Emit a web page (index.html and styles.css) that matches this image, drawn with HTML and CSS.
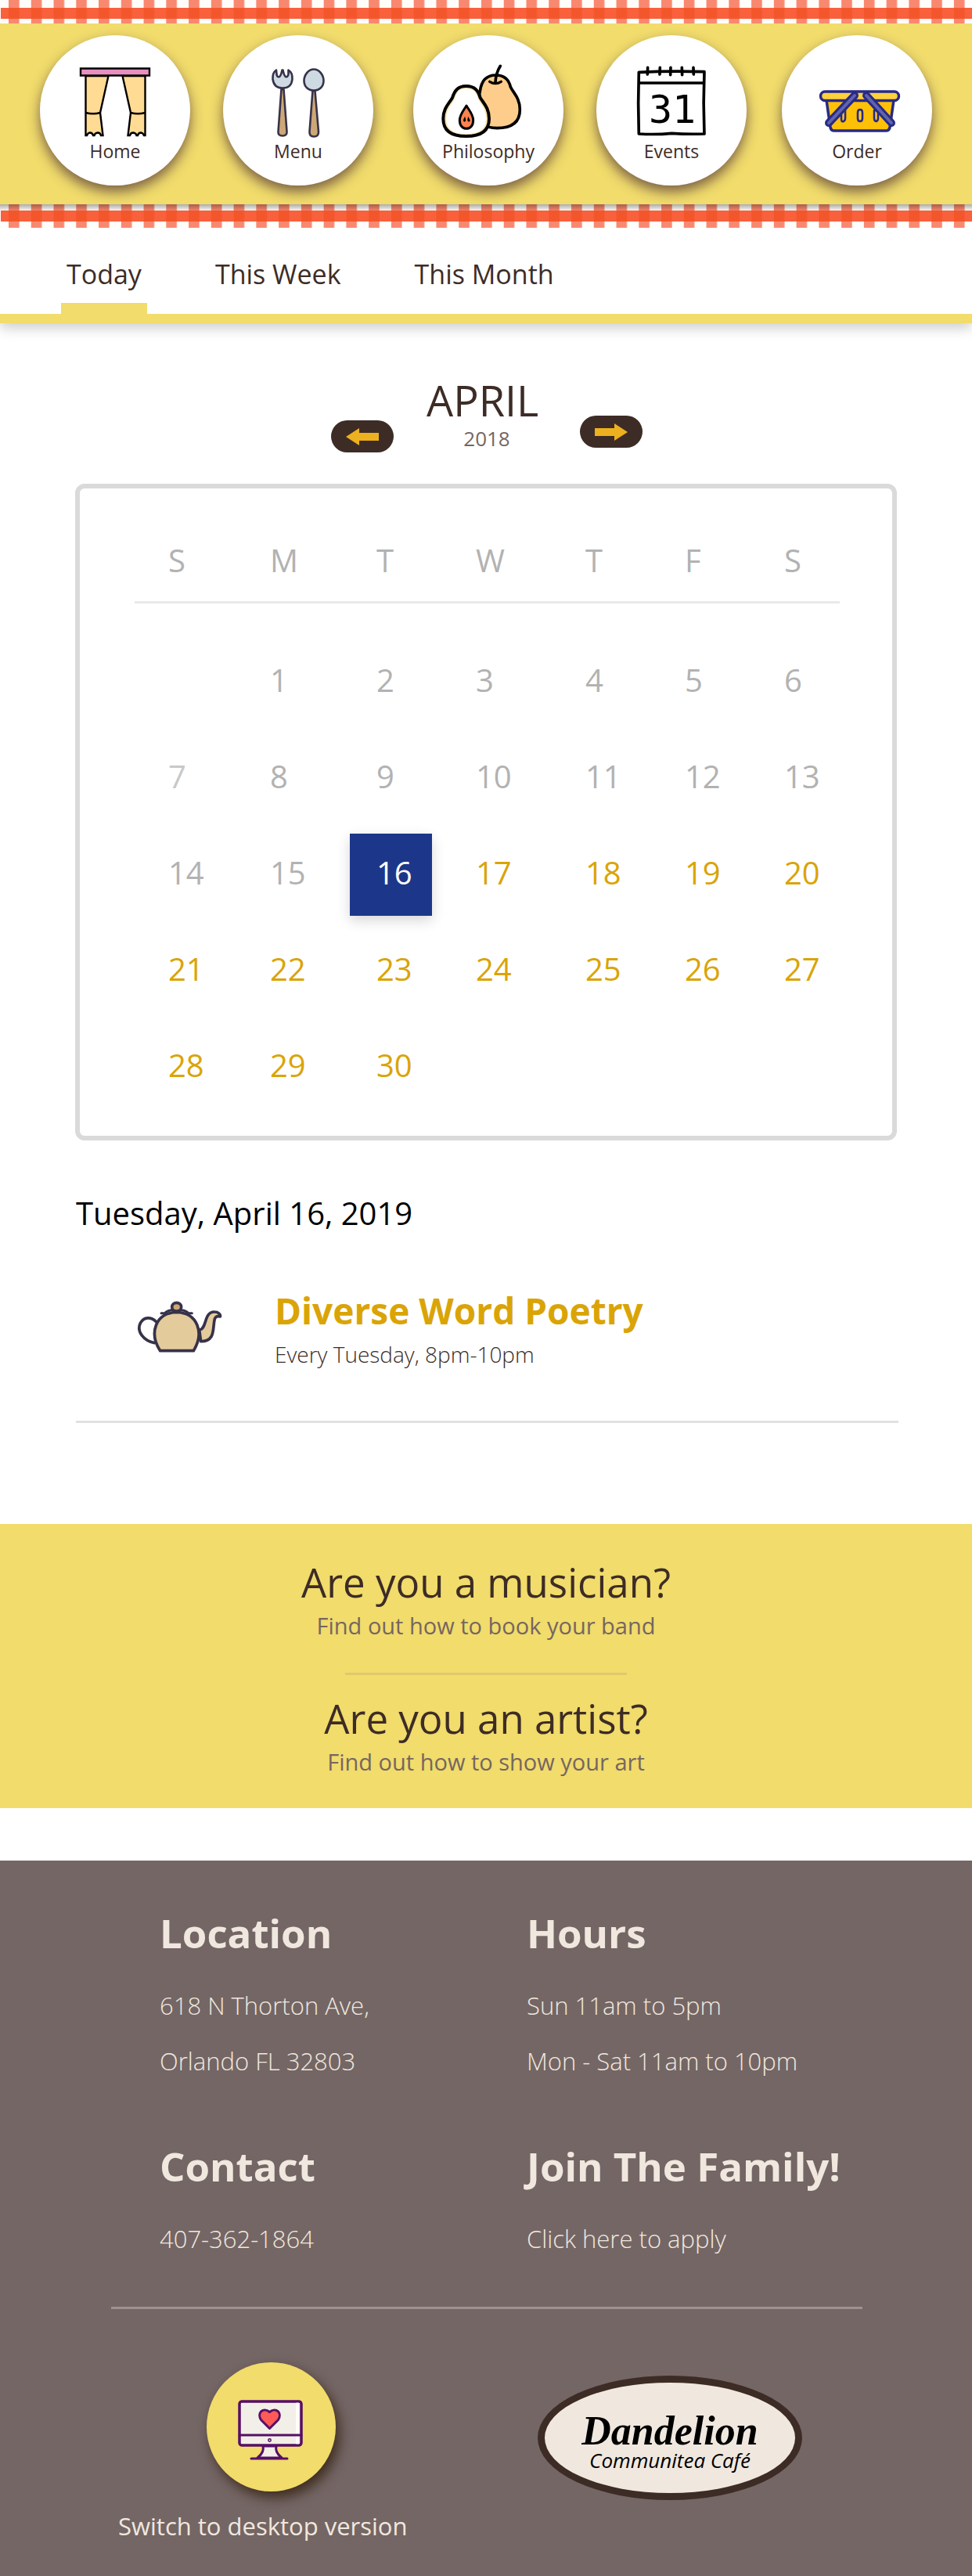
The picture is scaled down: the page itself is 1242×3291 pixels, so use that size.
FILE: index.html
```html
<!DOCTYPE html>
<html lang="en">
<head>
<meta charset="utf-8">
<meta name="viewport" content="width=device-width, initial-scale=1">
<title>Events – Dandelion Communitea Café</title>
<link rel="stylesheet" href="styles.css">
</head>
<body>
<header class="site-header">
  <svg class="gingham" aria-hidden="true">
    <defs>
      <pattern id="check" width="28.76" height="30" patternUnits="userSpaceOnUse" x="11">
        <rect width="28.76" height="30" fill="#fffdf9"/>
        <rect width="13.6" height="30" fill="#f98870"/>
      </pattern>
      <pattern id="cross" width="28.76" height="30" patternUnits="userSpaceOnUse" x="11">
        <rect width="28.76" height="30" fill="#f9603c"/>
        <rect width="13.6" height="30" fill="#f4562b"/>
      </pattern>
    </defs>
    <rect width="100%" height="30" fill="url(#check)"/>
    <rect x="1" y="10" width="100%" height="14" fill="url(#cross)"/>
  </svg>
  <nav class="main-nav" aria-label="Main">
    <a class="nav-item" href="#home">
      <svg class="nav-icon" viewBox="92 80 110 98" aria-hidden="true">
        <g fill="#ffdb93" stroke="#000" stroke-width="2.4">
          <path d="M109.500 97H138.500L128 144L131.500 173L129 173Q128 169.500 125 169.500Q121 170 120.500 173H119Q118 169.500 115 169.500Q112 170 111 173H109.500Z"/>
          <path d="M109.500 144Q119 146.500 128 144"/>
          <path d="M185.500 97H156.500L167 144L163.500 173L166 173Q167 169.500 170 169.500Q174 170 174.500 173H176Q177 169.500 180 169.500Q183 170 184 173H185.500Z"/>
          <path d="M185.500 144Q176 146.500 167 144"/>
          <path d="M103 87.500H191V96.500H103Z" fill="#e78fbf"/>
        </g>
      </svg>
      <span>Home</span>
    </a>
    <a class="nav-item" href="#menu">
      <svg class="nav-icon" viewBox="326 80 110 98" aria-hidden="true">
        <g stroke="#37324a" stroke-width="2.6" stroke-linejoin="round">
          <path d="M359.500 114H362.500L366.500 168Q367 173.500 361 173.500Q355 173.500 355.500 168Z" fill="#cda775"/>
          <path d="M353 89.500Q348 93 348.500 101Q350 112.500 361 112.500Q372.500 112.500 373.500 101Q374 93 368.500 89.500V95Q367.500 99 365 98Q363 97 361.500 89.500H360.500Q359 97 357 98Q354 99 353.500 95Z" fill="#cedae2"/>
          <path d="M399.500 116H402.500L407 168Q407.500 174.500 401 174.500Q395 174.500 395.500 168Z" fill="#cda775"/>
          <path d="M401 88.500C408 88.500 413.500 96 413.500 103C413.500 111 408 115.500 401 115.500C394 115.500 388.500 111 388.500 103C388.500 96 394 88.500 401 88.500Z" fill="#cedae2"/>
        </g>
      </svg>
      <span>Menu</span>
    </a>
    <a class="nav-item" href="#philosophy">
      <svg class="nav-icon" viewBox="569 80 110 98" aria-hidden="true">
        <g transform="translate(555 75) scale(.3333)" stroke="#000" stroke-linecap="round" stroke-linejoin="round">
          <path d="M235 63C270 63 286 82 292 108C302 130 328 150 328 195C328 245 295 266 240 266C195 266 170 250 160 200L175 125C180 85 200 63 235 63Z" fill="#ffcd8b" stroke-width="11"/>
          <path d="M212 88Q234 102 256 88" fill="none" stroke-width="10"/>
          <path d="M234 90Q236 55 253 28" fill="none" stroke-width="11"/>
          <path d="M122 105C155 105 168 122 176 150C190 172 210 190 210 230C210 275 180 297 122 297C64 297 34 275 34 230C34 190 56 172 69 150C78 122 90 105 122 105Z" fill="#ffe5b3" stroke-width="12"/>
          <path d="M122 115C150 115 160 130 167 154C180 178 198 194 198 230C198 268 172 288 122 288C72 288 46 268 46 230C46 194 66 178 78 154C86 130 94 115 122 115Z" fill="#fff" stroke="none"/>
          <path d="M123 180C135 200 149 214 149 236C149 256 138 268 123 268C108 268 97 256 97 236C97 214 111 200 123 180Z" fill="#fb8350" stroke-width="9"/>
          <path d="M117 225Q107 240 116 241Q123 240 117 225ZM130 225Q125 240 132 241Q141 240 130 225Z" fill="#000" stroke-width="2"/>
        </g>
      </svg>
      <span>Philosophy</span>
    </a>
    <a class="nav-item" href="#events">
      <svg class="nav-icon" viewBox="803 80 110 98" aria-hidden="true">
        <g transform="translate(555 75) scale(.3333)" fill="none" stroke="#000" stroke-width="11" stroke-linecap="round" stroke-linejoin="round">
          <path d="M784 52Q900 46 1035 50Q1030 170 1035 288Q970 290 910 286Q850 292 784 288Q780 170 784 52ZM784 93H1034"/>
          <path d="M818 34L817 60M865 34L864 60M906 34L905 62M949 34L950 62M993 34L994 60"/>
        </g>
        <text x="829" y="157" class="icon-date">31</text>
      </svg>
      <span>Events</span>
    </a>
    <a class="nav-item" href="#order">
      <svg class="nav-icon" viewBox="1040 80 110 98" aria-hidden="true">
        <g stroke="#282a86" stroke-width="3.500" stroke-linejoin="round" stroke-linecap="round">
          <path d="M1056 128H1142L1137 163Q1136 167 1132 167H1066Q1062 167 1061 163Z" fill="#ffc107"/>
          <rect x="1048.500" y="117" width="100" height="11.500" rx="5.700" fill="#ffd13b"/>
          <path d="M1075 141V152Q1075 156 1078 155Q1080 154 1080 151V141ZM1096 144Q1096 140 1099 140Q1102 140 1102 144V151Q1102 155 1099 155Q1096 155 1096 151ZM1117 141V151Q1117 155 1120 155Q1122 154 1122 151V141Z" fill="#ffc930" stroke-width="2.600"/>
        </g>
        <g fill="none" stroke-linecap="round">
          <path d="M1092 122L1059 157M1107 122L1139 157" stroke="#282a86" stroke-width="10"/>
          <path d="M1092 122L1059 157M1107 122L1139 157" stroke="#6264ab" stroke-width="4"/>
        </g>
      </svg>
      <span>Order</span>
    </a>
  </nav>
  <svg class="gingham" aria-hidden="true">
    <defs>
      <linearGradient id="shade" x2="0" y2="1">
        <stop stop-color="#000" stop-opacity=".32"/>
        <stop offset="1" stop-color="#000" stop-opacity="0"/>
      </linearGradient>
    </defs>
    <rect width="100%" height="30" fill="url(#check)"/>
    <rect x="1" y="8" width="100%" height="14" fill="url(#cross)"/>
    <rect width="100%" height="9" fill="url(#shade)"/>
  </svg>
</header>

<nav class="tabs" aria-label="Events range">
  <a class="tab tab-current" href="#today" aria-current="page">Today</a>
  <a class="tab" href="#week">This Week</a>
  <a class="tab" href="#month">This Month</a>
</nav>

<main>
  <div class="month-bar">
    <button class="month-button" type="button" aria-label="Previous month">
      <svg width="44" height="24" viewBox="0 0 44 24" aria-hidden="true"><path d="M1 12L18 1V7H43V17H18V23Z"/></svg>
    </button>
    <div class="month-title">
      <h1>APRIL</h1>
      <p>2018</p>
    </div>
    <button class="month-button month-next" type="button" aria-label="Next month">
      <svg width="44" height="24" viewBox="0 0 44 24" aria-hidden="true"><path d="M43 12L26 1V7H1V17H26V23Z"/></svg>
    </button>
  </div>

  <section class="calendar" aria-label="Calendar">
    <table>
      <colgroup>
        <col class="c-sun"><col class="c-mon"><col class="c-tue"><col class="c-wed"><col class="c-thu"><col class="c-fri"><col class="c-sat">
      </colgroup>
      <thead>
        <tr><th scope="col">S</th><th scope="col">M</th><th scope="col">T</th><th scope="col">W</th><th scope="col">T</th><th scope="col">F</th><th scope="col">S</th></tr>
      </thead>
      <tbody>
        <tr><td></td><td><button type="button" class="day">1</button></td><td><button type="button" class="day">2</button></td><td><button type="button" class="day">3</button></td><td><button type="button" class="day">4</button></td><td><button type="button" class="day">5</button></td><td><button type="button" class="day">6</button></td></tr>
        <tr><td><button type="button" class="day faded">7</button></td><td><button type="button" class="day">8</button></td><td><button type="button" class="day">9</button></td><td><button type="button" class="day">10</button></td><td><button type="button" class="day">11</button></td><td><button type="button" class="day">12</button></td><td><button type="button" class="day">13</button></td></tr>
        <tr><td><button type="button" class="day">14</button></td><td><button type="button" class="day">15</button></td><td><button type="button" class="day selected" aria-pressed="true">16</button></td><td><button type="button" class="day open">17</button></td><td><button type="button" class="day open">18</button></td><td><button type="button" class="day open">19</button></td><td><button type="button" class="day open">20</button></td></tr>
        <tr><td><button type="button" class="day open">21</button></td><td><button type="button" class="day open">22</button></td><td><button type="button" class="day open">23</button></td><td><button type="button" class="day open">24</button></td><td><button type="button" class="day open">25</button></td><td><button type="button" class="day open">26</button></td><td><button type="button" class="day open">27</button></td></tr>
        <tr><td><button type="button" class="day open">28</button></td><td><button type="button" class="day open">29</button></td><td><button type="button" class="day open">30</button></td><td></td><td></td><td></td><td></td></tr>
      </tbody>
    </table>
  </section>

  <section class="agenda">
    <h2>Tuesday, April 16, 2019</h2>
    <article class="event">
      <svg class="teapot" viewBox="0 0 330 210" aria-hidden="true">
        <g transform="translate(-45 -34)" stroke="#37324a" stroke-width="11" stroke-linejoin="round" stroke-linecap="round">
          <path d="M118 116C100 98 72 96 58 122C42 155 72 190 112 198" fill="none"/>
          <path d="M284 148C314 146 300 78 342 79C356 79 366 88 364 97Q348 92 343 106C334 140 348 192 290 192Z" fill="#e3cb9b"/>
          <path d="M134 228C90 160 116 82 197 80C278 82 304 160 262 228Z" fill="#e3cb9b"/>
          <path d="M138 84H152Q160 74 178 72H216Q234 74 242 84H256" fill="none" stroke-width="9"/>
          <ellipse cx="197" cy="60" rx="18" ry="16" fill="#cda775"/>
        </g>
      </svg>
      <div>
        <h3><a href="#diverse-word-poetry">Diverse Word Poetry</a></h3>
        <p>Every Tuesday, 8pm-10pm</p>
      </div>
    </article>
  </section>

  <section class="callouts">
    <a class="callout" href="#book"><strong>Are you a musician?</strong><span>Find out how to book your band</span></a>
    <hr>
    <a class="callout" href="#show"><strong>Are you an artist?</strong><span>Find out how to show your art</span></a>
  </section>
</main>

<footer class="site-footer">
  <div class="footer-grid">
    <section><h2>Location</h2><p>618 N Thorton Ave,</p><p>Orlando FL 32803</p></section>
    <section><h2>Hours</h2><p>Sun 11am to 5pm</p><p>Mon - Sat 11am to 10pm</p></section>
    <section><h2>Contact</h2><p><a href="tel:4073621864">407-362-1864</a></p></section>
    <section><h2>Join The Family!</h2><p><a href="#apply">Click here to apply</a></p></section>
  </div>
  <div class="footer-bottom">
    <a class="desktop-link" href="#desktop">
      <span class="desktop-icon">
        <svg width="84" height="78" viewBox="0 0 84 78" aria-hidden="true">
          <g stroke="#570f66" stroke-width="3" stroke-linejoin="round" stroke-linecap="round">
            <path d="M32 59Q34 67 25 74H56Q47 67 49 59Z" fill="#f2efe8"/>
            <rect x="2" y="2" width="79" height="56" rx="3" fill="#f2efe8"/>
            <path d="M76 4V56" stroke="#fffdf6" stroke-width="4"/>
            <rect x="2" y="2" width="79" height="56" rx="3" fill="none"/>
            <path d="M2 45H81M17 75H63"/>
            <path d="M40.500 36.500L29.500 25.500C24 17 32 8.500 40.500 15.500C49 8.500 57 17 51.500 25.500Z" fill="#ff5a56"/>
            <circle cx="40.500" cy="51.500" r="1.700" fill="#f2efe8" stroke-width="1.500"/>
          </g>
        </svg>
      </span>
      <span class="desktop-label">Switch to desktop version</span>
    </a>
    <a class="logo" href="#home"><span class="logo-name">Dandelion</span><span class="logo-sub">Communitea Café</span></a>
  </div>
</footer>
</body>
</html>
```
FILE: styles.css
```css
* { box-sizing: border-box; }

body {
  margin: 0;
  background: #fff;
  color: #3d2c26;
  font-family: "Open Sans", "Noto Sans", sans-serif;
}

h1, h2, h3, p { margin: 0; font-weight: 400; }
a { color: inherit; text-decoration: none; }
button { border: 0; margin: 0; font: inherit; cursor: pointer; }
svg { display: block; }

/* Header */
.gingham { width: 100%; height: 30px; }

.main-nav {
  display: grid;
  grid-template-columns: 78fr 81fr 78fr 79fr 64fr;
  padding: 15px 51px 24px;
  background: #f1dc6c;
}

.nav-item {
  display: flex;
  flex-direction: column;
  align-items: center;
  width: 192px;
  height: 192px;
  padding-top: 35px;
  border-radius: 50%;
  background: #fff;
  box-shadow: 0 8px 16px rgba(70, 40, 50, .68);
  font-size: 23px;
  line-height: 30px;
}

.nav-icon { width: 110px; height: 98px; overflow: visible; }
.icon-date { font: 50px "DejaVu Sans Mono", monospace; }

/* Tabs */
.tabs {
  display: flex;
  gap: 80px;
  padding-left: 78px;
  border-bottom: 12px solid #f1dc6c;
  box-shadow: 0 6px 16px rgba(0, 0, 0, .2);
  font-size: 34px;
  line-height: 48px;
}

.tab {
  padding: 35px 7px 13px;
  border-bottom: 14px solid transparent;
}

.tab-current { border-color: #f1dc6c; }

/* Month switcher */
.month-bar {
  display: flex;
  justify-content: center;
  align-items: flex-end;
  gap: 42px;
  margin: 67px 0 40px;
  padding-left: 2px;
}

.month-title { min-width: 154px; }
.month-title h1 { font-size: 54px; line-height: 62px; }
.month-title p { color: #766660; font-size: 26px; line-height: 36px; text-align: center; }

.month-button {
  display: flex;
  justify-content: center;
  align-items: center;
  width: 80px;
  height: 41px;
  padding: 0;
  border-radius: 21px;
  background: #3d2c26;
  fill: #edb120;
}

.month-next { margin-bottom: 6px; }

/* Calendar */
.calendar {
  margin: 0 96px;
  padding: 64px 67px 26px 70px;
  border: 6px solid #dadada;
  border-radius: 12px;
  color: #b2b2b2;
  font-size: 40px;
  line-height: 56px;
}

.calendar table { width: 100%; table-layout: fixed; border-collapse: separate; border-spacing: 0; }
.c-sun { width: 130px; }
.c-mon { width: 136px; }
.c-tue { width: 127px; }
.c-wed { width: 140px; }
.c-thu { width: 127px; }
.c-fri { width: 127px; }
.c-sat { width: 114px; }

.calendar th {
  padding: 0 0 24px 43px;
  border-bottom: 3px solid #e9e9e9;
  font-weight: 400;
  text-align: left;
}

.calendar tbody::before { content: ""; display: block; height: 39px; }
.calendar td { height: 123px; padding: 0 0 0 9px; vertical-align: middle; }

.day {
  display: block;
  width: 105px;
  height: 105px;
  padding: 0 0 6px 34px;
  background: none;
  color: inherit;
  text-align: left;
}

.faded { color: #c8c8c8; }
.open { color: #daa407; }
.selected { background: #1c3789; color: #fff; box-shadow: 0 6px 16px rgba(0, 0, 0, .16); }

/* Agenda */
.agenda {
  margin: 65px 94px 129px 97px;
  padding-bottom: 65px;
  border-bottom: 3px solid #e1e1e1;
}

.agenda h2 { color: #000; font-size: 40px; line-height: 56px; }

.event {
  display: flex;
  align-items: center;
  gap: 66px;
  margin-top: 64px;
  padding-left: 78px;
}

.teapot { width: 110px; height: 70px; }
.event h3 { color: #daa407; font-size: 46px; font-weight: 700; line-height: 64px; }
.event p { margin-top: 4px; font-size: 28px; font-weight: 300; line-height: 40px; }

/* Callouts */
.callouts {
  padding: 38px 0 39px;
  background: #f1dc6c;
  text-align: center;
}

.callout, .callout strong, .callout span { display: block; }
.callout strong { font-size: 51px; font-weight: 400; line-height: 72px; }
.callout span { color: #766660; font-size: 29px; line-height: 40px; }

.callouts hr {
  width: 360px;
  height: 3px;
  margin: 40px auto 19px;
  border: 0;
  background: #e0c86e;
}

/* Footer */
.site-footer {
  margin-top: 67px;
  padding: 56px 140px 41px 142px;
  background: #746665;
  color: #f0e8df;
}

.footer-grid {
  display: grid;
  grid-template-columns: 469fr 429fr;
  row-gap: 62px;
  padding: 0 0 51px 62px;
  border-bottom: 3px solid #a09190;
}

.footer-grid h2 { margin-bottom: 22px; font-size: 51px; font-weight: 700; line-height: 72px; white-space: nowrap; }
.footer-grid p { font-size: 31px; font-weight: 300; line-height: 71px; }

.footer-bottom {
  display: grid;
  grid-template-columns: 536fr 415fr;
  justify-items: start;
  padding: 68px 0 0 9px;
}

.desktop-link {
  display: flex;
  flex-direction: column;
  align-items: center;
  gap: 21px;
  min-width: 390px;
  font-size: 31px;
  line-height: 46px;
}

.desktop-label { align-self: flex-start; }

.desktop-icon {
  display: flex;
  justify-content: center;
  align-items: center;
  width: 165px;
  height: 165px;
  padding-top: 8px;
  border-radius: 50%;
  background: #f1dc6c;
  box-shadow: 5px 8px 16px rgba(40, 20, 0, .7);
}

.logo {
  display: flex;
  flex-direction: column;
  align-items: center;
  justify-content: center;
  width: 338px;
  height: 159px;
  margin-top: 17px;
  padding-top: 12px;
  border: 9px solid #3d2c26;
  border-radius: 50%;
  background: #f0e8df;
  color: #000;
  font-style: italic;
}

.logo-name { font-family: "Liberation Serif", serif; font-size: 52px; font-weight: 700; line-height: 44px; }
.logo-sub { font-size: 26px; line-height: 30px; }
```
